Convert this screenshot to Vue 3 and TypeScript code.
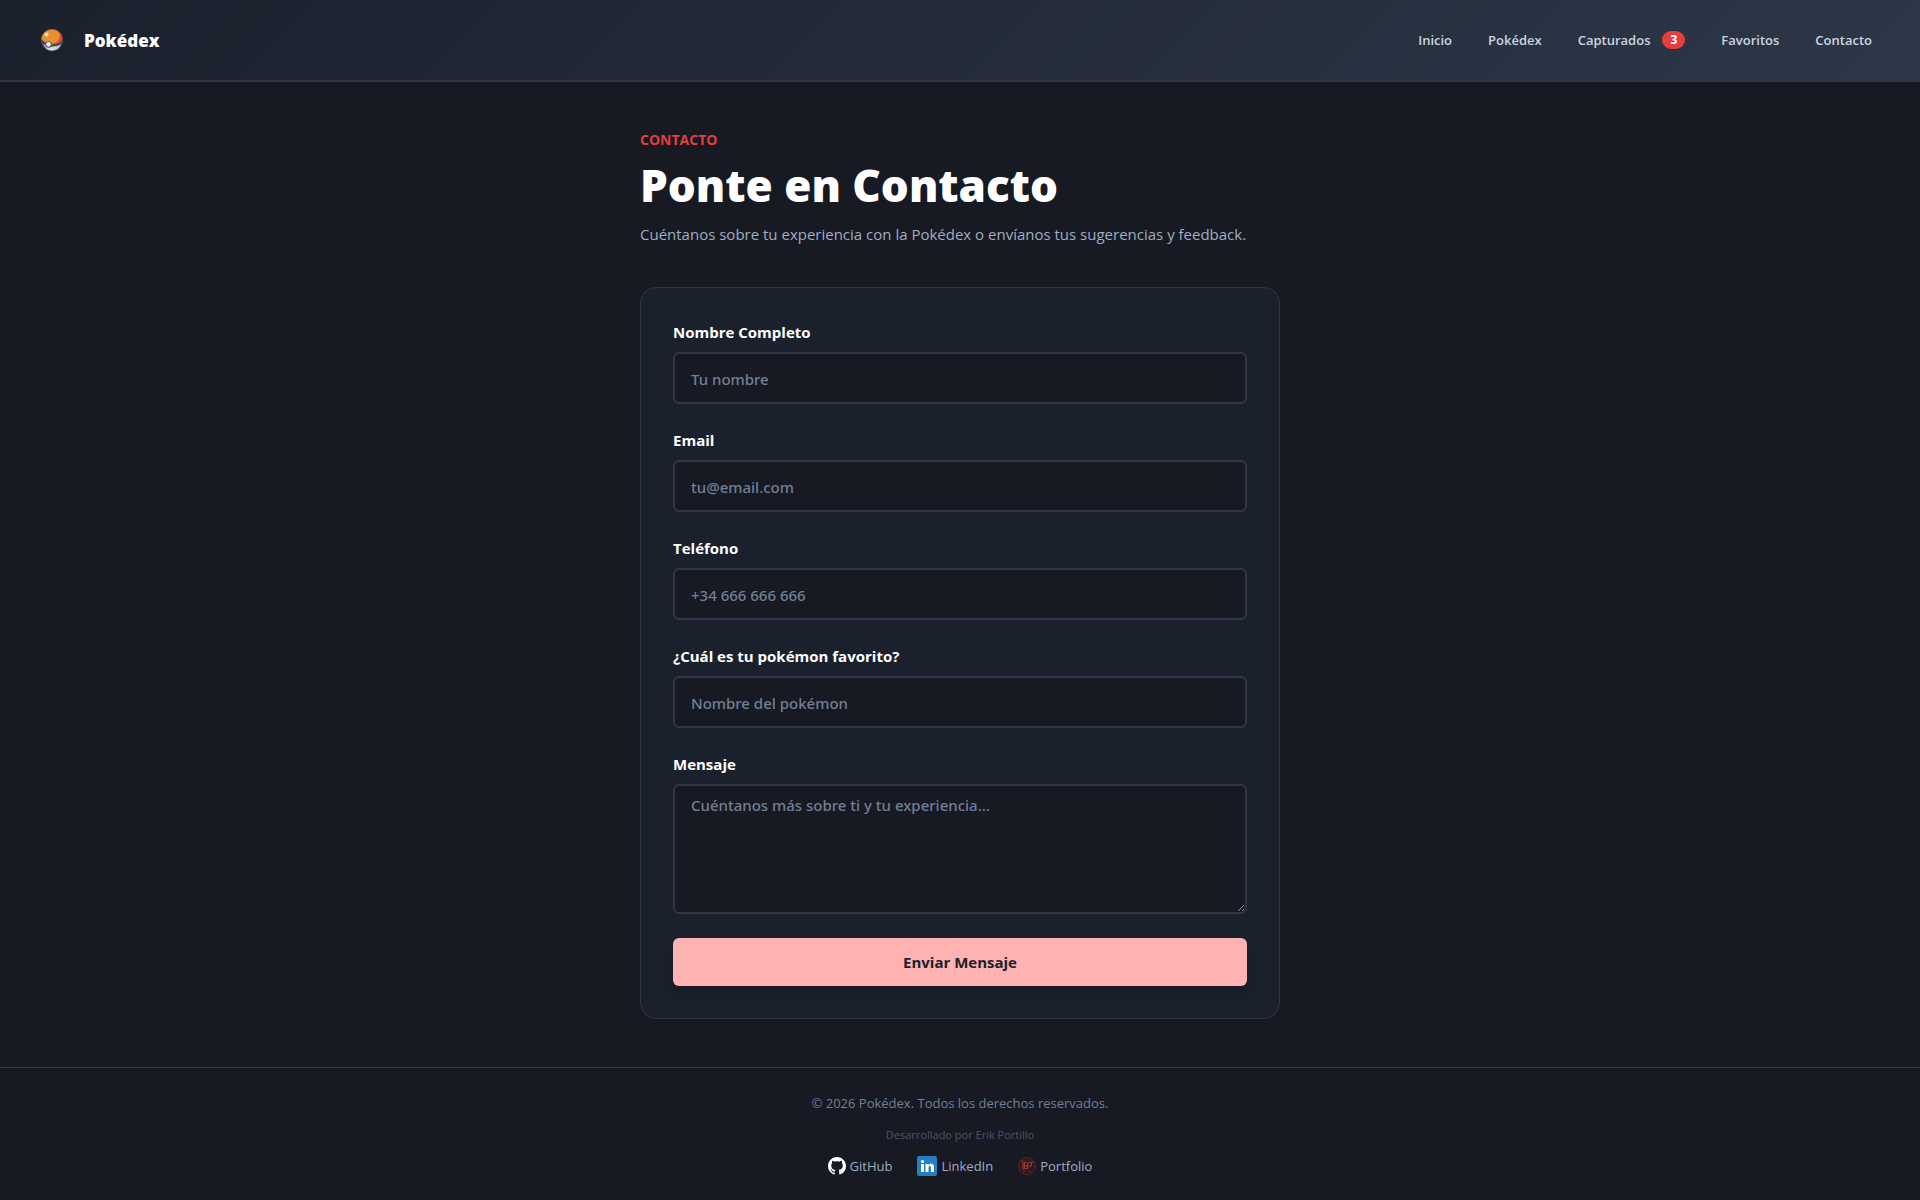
<script setup lang="ts">
import { reactive } from 'vue'

interface NavItem {
  label: string
  badge?: number
}

interface Field {
  id: 'nombre' | 'email' | 'telefono' | 'pokemon'
  label: string
  type: string
  placeholder: string
}

const navItems: NavItem[] = [
  { label: 'Inicio' },
  { label: 'Pokédex' },
  { label: 'Capturados', badge: 3 },
  { label: 'Favoritos' },
  { label: 'Contacto' },
]

const fields: Field[] = [
  { id: 'nombre', label: 'Nombre Completo', type: 'text', placeholder: 'Tu nombre' },
  { id: 'email', label: 'Email', type: 'email', placeholder: 'tu@email.com' },
  { id: 'telefono', label: 'Teléfono', type: 'tel', placeholder: '+34 666 666 666' },
  { id: 'pokemon', label: '¿Cuál es tu pokémon favorito?', type: 'text', placeholder: 'Nombre del pokémon' },
]

const form = reactive({ nombre: '', email: '', telefono: '', pokemon: '', mensaje: '' })
</script>

<template>
  <div class="page">
    <header class="header">
      <a class="brand" href="#">
        <svg class="ball" viewBox="0 0 22 22" aria-hidden="true">
          <circle cx="11" cy="11" r="11" fill="#55494f" />
          <path d="M2 14 Q11 20 20.500 13.500 Q19 21.500 11 21.700 Q4 21.500 2 14Z" fill="#b4cadb" />
          <path d="M5 18 Q11 20 17 17 Q14 21 11 21 Q7 21 5 18Z" fill="#d3e1ea" />
          <path d="M1 12 Q10 19 21 11 V15 Q11 20 2 15Z" fill="#454952" />
          <path d="M.5 10 A10.500 10 0 0 1 21.500 10 Q21 13 17 14.500 Q7 18 .5 10Z" fill="#e5432f" />
          <path d="M.5 10 A10.500 10 0 0 1 18.500 4 Q20 10 15 13.500 Q7 17 .5 10Z" fill="#e6912f" />
          <circle cx="7.500" cy="15.500" r="3.200" fill="#5c6068" />
          <circle cx="7.500" cy="15.300" r="2.200" fill="#eef2f4" />
          <circle cx="5.500" cy="5.500" r="2" fill="#fbe3bd" />
        </svg>
        <span>Pokédex</span>
      </a>
      <nav class="nav">
        <a v-for="item in navItems" :key="item.label" href="#">
          {{ item.label }}
          <span v-if="item.badge" class="badge">{{ item.badge }}</span>
        </a>
      </nav>
    </header>

    <main class="main">
      <p class="eyebrow">CONTACTO</p>
      <h1>Ponte en Contacto</h1>
      <p class="lead">Cuéntanos sobre tu experiencia con la Pokédex o envíanos tus sugerencias y feedback.</p>

      <form class="card" @submit.prevent>
        <div v-for="field in fields" :key="field.id" class="field">
          <label :for="field.id">{{ field.label }}</label>
          <input :id="field.id" v-model="form[field.id]" :type="field.type" :placeholder="field.placeholder" />
        </div>
        <div class="field">
          <label for="mensaje">Mensaje</label>
          <textarea id="mensaje" v-model="form.mensaje" placeholder="Cuéntanos más sobre ti y tu experiencia..."></textarea>
        </div>
        <button type="submit">Enviar Mensaje</button>
      </form>
    </main>

    <footer class="footer">
      <p class="rights">© 2026 Pokédex. Todos los derechos reservados.</p>
      <p class="author">Desarrollado por Erik Portillo</p>
      <div class="links">
        <a href="#">
          <svg width="18" height="18" viewBox="0 0 16 16" aria-hidden="true">
            <path fill="#fff" d="M8 0C3.580 0 0 3.580 0 8c0 3.540 2.290 6.530 5.470 7.590.4.070.55-.17.55-.38 0-.19-.01-.82-.01-1.490-2.010.37-2.530-.49-2.690-.94-.09-.23-.48-.94-.82-1.130-.28-.15-.68-.52-.01-.53.63-.01 1.080.58 1.230.82.72 1.210 1.870.87 2.330.66.070-.52.28-.87.51-1.070-1.780-.2-3.640-.89-3.640-3.950 0-.87.31-1.590.82-2.150-.08-.2-.36-1.020.08-2.120 0 0 .67-.21 2.200.82.64-.18 1.320-.27 2-.27s1.360.09 2 .27c1.530-1.040 2.200-.82 2.200-.82.44 1.100.16 1.920.08 2.120.51.56.82 1.270.82 2.150 0 3.070-1.870 3.750-3.650 3.950.29.25.54.73.54 1.480 0 1.070-.01 1.930-.01 2.200 0 .21.15.46.55.38A8.010 8.010 0 0 0 16 8c0-4.420-3.580-8-8-8z" />
          </svg>
          GitHub
        </a>
        <a href="#">
          <svg width="20" height="20" viewBox="0 0 20 20" aria-hidden="true">
            <rect width="20" height="20" rx="2" fill="#2580c3" />
            <circle cx="5.500" cy="5.500" r="1.600" fill="#fff" />
            <path fill="#fff" d="M4 8h3v8H4zM8.500 8h2.800v1.200C12 8.200 13 7.800 14 7.800c2.300 0 3 1.500 3 3.700V16h-3v-4c0-1.100-.2-1.900-1.200-1.900S11.500 11 11.500 12v4h-3z" />
          </svg>
          LinkedIn
        </a>
        <a href="#">
          <svg width="18" height="18" viewBox="0 0 18 18" fill="none" aria-hidden="true">
            <circle cx="9" cy="9" r="8.500" fill="#32191d" stroke="#662e29" stroke-dasharray="3 1" />
            <path d="M4 5l5 .5M5 6v6l4-.5M5 8.500l4 .3M9.500 12V6l4-.5V9l-3.500.5M6.500 6v5" stroke="#944131" />
            <path d="M5 15l2-1M11 15l2-1M3 4l2-1M14 4l1 2" stroke="#743229" />
          </svg>
          Portfolio
        </a>
      </div>
    </footer>
  </div>
</template>

<style>
body {
  margin: 0;
  background: #171923;
}
</style>

<style scoped>
.page {
  min-height: 100vh;
  display: flex;
  flex-direction: column;
  background: #171923;
  color: #fff;
  font-family: "Open Sans", "Noto Sans", sans-serif;
}

p,
h1 {
  margin: 0;
}

a {
  color: inherit;
  text-decoration: none;
}

.header {
  box-sizing: border-box;
  height: 82px;
  padding: 0 48px 0 41px;
  display: flex;
  align-items: center;
  justify-content: space-between;
  border-bottom: 2px solid #2d3748;
  background: linear-gradient(135deg, #1a202c 0%, #2d3748 100%);
  box-shadow: 0 4px 6px rgba(0, 0, 0, 0.1);
}

.brand {
  display: flex;
  align-items: center;
  gap: 21px;
  font-size: 17px;
  font-weight: 800;
}

.ball {
  width: 22px;
  height: 22px;
}

.nav {
  display: flex;
  gap: 36px;
  color: #cbd5e0;
  font-size: 13px;
  font-weight: 600;
}

.nav a {
  display: flex;
  align-items: center;
  gap: 12px;
}

.badge {
  padding: 0 8px;
  border-radius: 9px;
  background: #e53e3e;
  color: #fff;
  font-size: 12px;
  font-weight: 700;
  line-height: 18px;
}

.main {
  box-sizing: border-box;
  width: 100%;
  max-width: 640px;
  margin: 0 auto;
  padding: 48px 0;
}

.eyebrow {
  color: #e53e3e;
  font-size: 14px;
  font-weight: 700;
  line-height: 20px;
}

h1 {
  margin-top: 6px;
  font-size: 44px;
  font-weight: 800;
  line-height: 58px;
}

.lead {
  margin-top: 8px;
  color: #a0aec0;
  font-size: 15px;
  line-height: 24px;
}

.card {
  margin-top: 41px;
  padding: 32px;
  border: 1px solid #2d3748;
  border-radius: 16px;
  background: #1a202c;
}

.field {
  margin-bottom: 24px;
}

label {
  display: block;
  margin-bottom: 8px;
  font-size: 15px;
  font-weight: 700;
  line-height: 24px;
}

input,
textarea {
  display: block;
  box-sizing: border-box;
  width: 100%;
  height: 52px;
  padding: 2px 16px 0;
  border: 2px solid #2d3748;
  border-radius: 6px;
  outline: none;
  background: #171923;
  color: #fff;
  font: 500 15px/22px "Noto Sans", "Open Sans", sans-serif;
}

textarea {
  height: 130px;
  padding: 8px 16px;
  resize: vertical;
}

input::placeholder,
textarea::placeholder {
  color: #718096;
  opacity: 1;
}

button {
  display: block;
  width: 100%;
  height: 48px;
  border: 0;
  border-radius: 6px;
  background: #feb2b2;
  color: #1a202c;
  font: 700 15px/24px "Open Sans", "Noto Sans", sans-serif;
  box-shadow: 0 10px 15px -3px rgba(0, 0, 0, 0.1), 0 4px 6px -2px rgba(0, 0, 0, 0.05);
  cursor: pointer;
}

.footer {
  flex: 1;
  padding: 23px 0 20px;
  display: flex;
  flex-direction: column;
  align-items: center;
  border-top: 1px solid #2d3748;
}

.rights {
  color: #718096;
  font-size: 13px;
  line-height: 24px;
}

.author {
  margin-top: 8px;
  color: #4a5568;
  font-size: 11px;
  line-height: 24px;
}

.links {
  margin-top: 8px;
  display: flex;
  gap: 25px;
  color: #a0aec0;
  font-size: 13px;
  line-height: 22px;
}

.links a {
  display: flex;
  align-items: center;
  gap: 4px;
}
</style>
